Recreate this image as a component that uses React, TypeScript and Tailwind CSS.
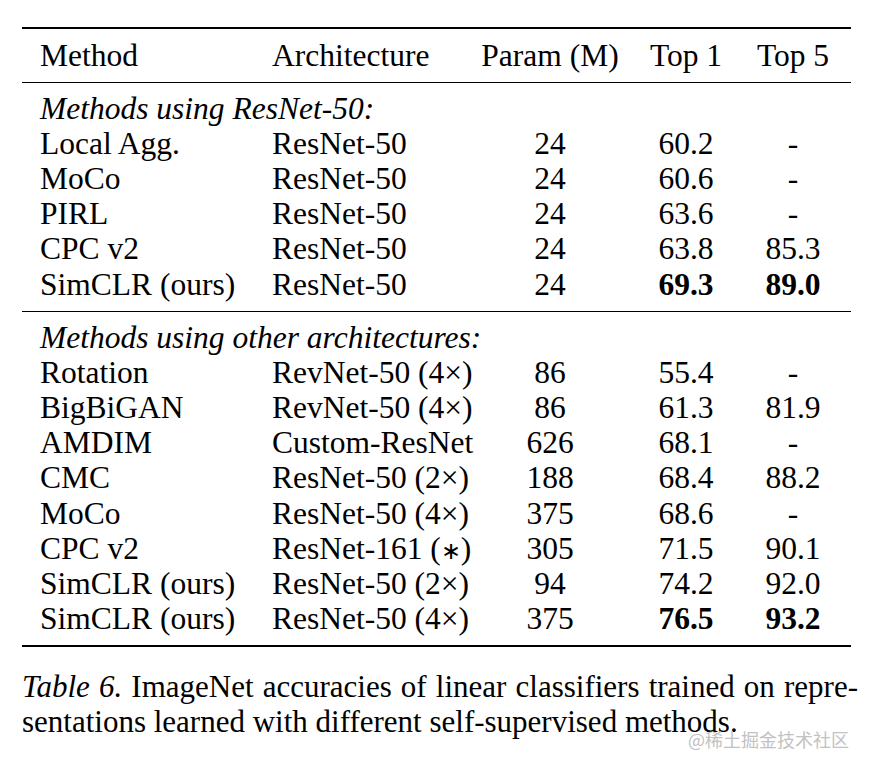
const groups = [
  {
    label: "Methods using ResNet-50:",
    rows: [
      ["Local Agg.", "ResNet-50", "24", "60.2", "-"],
      ["MoCo", "ResNet-50", "24", "60.6", "-"],
      ["PIRL", "ResNet-50", "24", "63.6", "-"],
      ["CPC v2", "ResNet-50", "24", "63.8", "85.3"],
      ["SimCLR (ours)", "ResNet-50", "24", "69.3", "89.0", "bold"],
    ],
  },
  {
    label: "Methods using other architectures:",
    rows: [
      ["Rotation", "RevNet-50 (4×)", "86", "55.4", "-"],
      ["BigBiGAN", "RevNet-50 (4×)", "86", "61.3", "81.9"],
      ["AMDIM", "Custom-ResNet", "626", "68.1", "-"],
      ["CMC", "ResNet-50 (2×)", "188", "68.4", "88.2"],
      ["MoCo", "ResNet-50 (4×)", "375", "68.6", "-"],
      ["CPC v2", "ResNet-161 (∗)", "305", "71.5", "90.1"],
      ["SimCLR (ours)", "ResNet-50 (2×)", "94", "74.2", "92.0"],
      ["SimCLR (ours)", "ResNet-50 (4×)", "375", "76.5", "93.2", "bold"],
    ],
  },
];

const cols = "grid grid-cols-[232px_208px_140px_132px_82px] pl-[18px]";

// the math asterisk falls back to a heavier font, so shrink it
function Arch({ text }: { text: string }) {
  if (!text.includes("∗")) return <>{text}</>;
  const [a, b] = text.split("∗");
  return (
    <>
      {a}
      <span className="text-[24px] font-light">∗</span>
      {b}
    </>
  );
}

function Row({ cells }: { cells: string[] }) {
  const bold = cells[5] === "bold";
  return (
    <div className={`${cols} h-[35.2px] items-center`}>
      <div>{cells[0]}</div>
      <div>
        <Arch text={cells[1]} />
      </div>
      <div className="text-center">{cells[2]}</div>
      <div className={`text-center ${bold ? "font-bold" : ""}`}>{cells[3]}</div>
      <div className={`text-center ${bold ? "font-bold" : ""}`}>{cells[4]}</div>
    </div>
  );
}

export default function App() {
  return (
    <div
      className="relative h-[772px] w-[870px] overflow-hidden bg-white pl-[22px] pt-[27px] text-black"
      style={{ fontFamily: '"Liberation Serif", "Times New Roman", serif' }}
    >
      <div className="w-[829px] text-[31.5px] leading-none">
        <div className="border-t-2 border-black" />
        <div className={`${cols} h-[53px] items-center`}>
          <div>Method</div>
          <div>Architecture</div>
          <div className="text-center">Param (M)</div>
          <div className="text-center">Top 1</div>
          <div className="text-center">Top 5</div>
        </div>
        {groups.map((g, i) => (
          <div
            key={g.label}
            className={`${i === 0 ? "border-t border-black" : "border-t-[1.5px] border-black"} pt-[8px] pb-[9px]`}
          >
            <div className="flex h-[35px] items-center pl-[18px] italic">{g.label}</div>
            {g.rows.map((r, j) => (
              <Row key={j} cells={r} />
            ))}
          </div>
        ))}
        <div className="border-t-2 border-black" />
      </div>

      <div className="mt-[22px] w-[836px] text-[31px] leading-[35px]">
        <div className="text-justify [text-align-last:justify]">
          <span className="italic">Table 6.</span> ImageNet accuracies of linear classifiers trained on repre-
        </div>
        <div>sentations learned with different self-supervised methods.</div>
      </div>

      <div
        className="absolute left-[688px] top-[730px] text-[18px] leading-none text-[#c2c2c2]"
        style={{ fontFamily: '"Noto Sans CJK SC", "Noto Sans", sans-serif' }}
      >
        @稀土掘金技术社区
      </div>
    </div>
  );
}
